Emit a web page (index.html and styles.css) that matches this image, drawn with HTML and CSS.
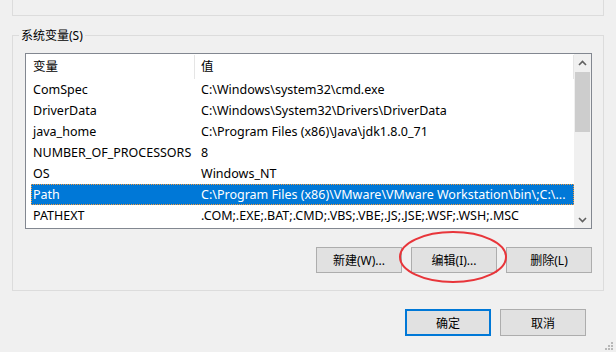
FILE: index.html
```html
<!DOCTYPE html>
<html lang="zh-CN">
<head>
    <meta charset="UTF-8">
    <title>环境变量</title>
    <link rel="stylesheet" href="styles.css">
</head>
<body>
    <!-- bottom of the user variables group -->
    <div class="prev-group"></div>

    <!-- system variables -->
    <fieldset class="group">
        <legend>系统变量(S)</legend>
        <div class="listview">
            <div class="list-body">
                <div class="list-header">
                    <div class="hcol hcol-name">变量</div>
                    <div class="hcol hcol-value">值</div>
                </div>
                <div class="row"><span class="name">ComSpec</span><span class="value">C:\Windows\system32\cmd.exe</span></div>
                <div class="row"><span class="name">DriverData</span><span class="value">C:\Windows\System32\Drivers\DriverData</span></div>
                <div class="row"><span class="name">java_home</span><span class="value">C:\Program Files (x86)\Java\jdk1.8.0_71</span></div>
                <div class="row"><span class="name">NUMBER_OF_PROCESSORS</span><span class="value">8</span></div>
                <div class="row"><span class="name">OS</span><span class="value">Windows_NT</span></div>
                <div class="row selected"><span class="name">Path</span><span class="value">C:\Program Files (x86)\VMware\VMware Workstation\bin\;C:\...</span></div>
                <div class="row"><span class="name">PATHEXT</span><span class="value">.COM;.EXE;.BAT;.CMD;.VBS;.VBE;.JS;.JSE;.WSF;.WSH;.MSC</span></div>
            </div>
            <div class="scrollbar">
                <div class="arrow">
                    <svg width="9" height="6" viewBox="0 0 9 6"><path d="M1 5 L4.5 1.5 L8 5" fill="none" stroke="#606060" stroke-width="1.6"/></svg>
                </div>
                <div class="track"><div class="thumb"></div></div>
                <div class="arrow">
                    <svg width="9" height="6" viewBox="0 0 9 6"><path d="M1 1 L4.5 4.5 L8 1" fill="none" stroke="#606060" stroke-width="1.6"/></svg>
                </div>
            </div>
        </div>
        <div class="group-actions">
            <button class="btn">新建(W)...</button>
            <button class="btn">编辑(I)...</button>
            <button class="btn">删除(L)</button>
        </div>
    </fieldset>

    <div class="dialog-actions">
        <button class="btn btn-default">确定</button>
        <button class="btn">取消</button>
    </div>

    <!-- red annotation round the edit button -->
    <svg class="mark" width="110" height="54" viewBox="0 0 110 54">
        <ellipse cx="55" cy="27" rx="53" ry="25" fill="none" stroke="#e8353a" stroke-width="2"/>
    </svg>

    <div class="grip">
        <svg width="12" height="12" viewBox="0 0 12 12" fill="#b8b8b8">
            <rect x="9" y="1" width="2" height="2"/>
            <rect x="6" y="4" width="2" height="2"/>
            <rect x="9" y="4" width="2" height="2"/>
            <rect x="3" y="7" width="2" height="2"/>
            <rect x="6" y="7" width="2" height="2"/>
            <rect x="9" y="7" width="2" height="2"/>
        </svg>
    </div>
</body>
</html>
```

FILE: styles.css
```css
body {
    margin: 0;
    width: 616px;
    height: 352px;
    overflow: hidden;
    background-color: #f0f0f0;
    font-family: "Noto Sans", "Noto Sans CJK SC", sans-serif;
    font-size: 12px;
    color: #000;
    position: relative;
}
.prev-group {
    box-sizing: border-box;
    height: 16px;
    margin: 0 12px;
    border: 1px solid #dcdcdc;
    border-top: none;
}
.group {
    margin: 12px 12px 0;
    padding: 10px 11px 17px 12px;
    border: 1px solid #dcdcdc;
    min-width: 0;
}
.group legend {
    padding: 0 2px;
    margin-left: -6px;
    line-height: 15px;
    font-size: 12px;
}
.listview {
    box-sizing: border-box;
    height: 176px;
    border: 1px solid #828790;
    background-color: #fff;
    display: flex;
    overflow: hidden;
    font-size: 12.5px;
}
.list-body {
    flex: 1;
    overflow: hidden;
}
.list-header {
    display: flex;
    height: 25px;
    align-items: center;
}
.hcol {
    box-sizing: border-box;
    height: 24px;
    line-height: 24px;
    border-right: 1px solid #e5e5e5;
}
.hcol-name {
    width: 169px;
    padding-left: 7px;
}
.hcol-value {
    flex: 1;
    padding-left: 6px;
}
.row {
    display: flex;
    height: 21px;
    line-height: 21px;
    margin-left: 5px;
    padding-left: 2px;
    white-space: nowrap;
}
.row .name {
    width: 161px;
    flex-shrink: 0;
}
.row .value {
    padding-left: 7px;
}
.row.selected {
    background-color: #0078d7;
    color: #fff;
    outline: 1px dotted #f39a3c;
    outline-offset: -1px;
}
.scrollbar {
    width: 17px;
    background-color: #f0f0f0;
    display: flex;
    flex-direction: column;
}
.arrow {
    height: 17px;
    display: flex;
    align-items: center;
    justify-content: center;
}
.track {
    flex: 1;
    padding: 1px 1px 0;
}
.thumb {
    height: 60px;
    background-color: #cdcdcd;
}
.group-actions {
    display: flex;
    justify-content: flex-end;
    gap: 9px;
    margin-top: 18px;
}
.btn {
    box-sizing: border-box;
    width: 86px;
    height: 26px;
    margin: 0;
    padding: 0;
    background-color: #e1e1e1;
    border: 1px solid #adadad;
    font-family: "Noto Sans", "Noto Sans CJK SC", sans-serif;
    font-size: 12px;
    color: #000;
}
.dialog-actions {
    display: flex;
    justify-content: flex-end;
    gap: 9px;
    margin-top: 18px;
    padding-right: 30px;
}
.dialog-actions .btn {
    height: 27px;
}
.btn-default {
    border: 2px solid #0078d7;
}
.mark {
    position: absolute;
    left: 398px;
    top: 230px;
}
.grip {
    position: absolute;
    right: 2px;
    bottom: 0;
    height: 12px;
}
```
